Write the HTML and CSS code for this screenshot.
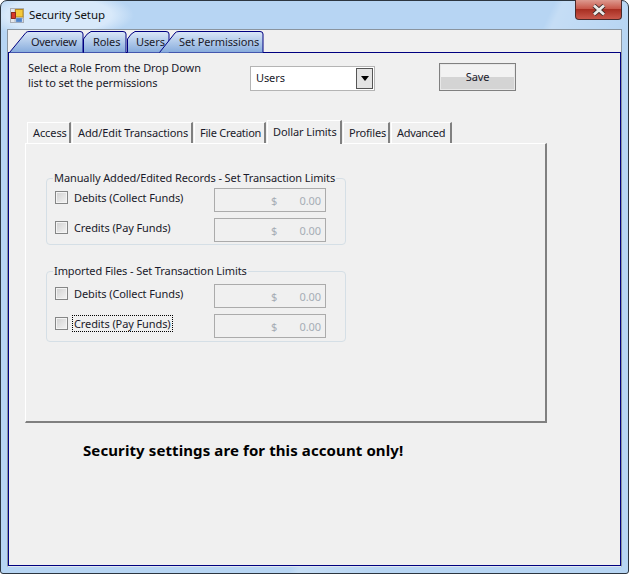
FILE: index.html
```html
<!DOCTYPE html>
<html lang="en">
<head>
    <meta charset="UTF-8">
    <title>Security Setup</title>
    <link rel="stylesheet" href="styles.css">
</head>
<body>
<div class="window">
    <!-- title bar -->
    <div class="titlebar">
        <svg class="app-icon" width="14" height="15" viewBox="0 0 14 15">
            <rect x="0.5" y="0.5" width="13" height="14" fill="#e4e7ec" stroke="#a9aeb6"/>
            <path d="M0.5 4.5 H5 M5 0.5 V14.5 M0.5 10.5 H13.5" stroke="#b4b9c0" fill="none"/>
            <rect x="5.5" y="1.5" width="7.5" height="7.5" fill="#f4c93a" stroke="#b8891c"/>
            <rect x="1.5" y="4.5" width="4" height="6" fill="#d8382a" stroke="#8e2a1c"/>
            <rect x="6" y="10" width="6" height="4" fill="#4f83c9" stroke="#8fb0dc" stroke-width="0.5"/>
        </svg>
        <span class="title-text">Security Setup</span>
        <div class="close-btn">
            <svg width="16" height="12" viewBox="0 0 16 12">
                <path d="M3 1.5 L13 10.5 M13 1.5 L3 10.5" stroke="#3a2a2a" stroke-width="4.4" fill="none"/>
                <path d="M3 1.5 L13 10.5 M13 1.5 L3 10.5" stroke="#ecebe8" stroke-width="2.8" fill="none"/>
            </svg>
        </div>
    </div>

    <div class="client">
        <!-- top tabs -->
        <div class="top-tabs">
            <div class="top-tab tab-overview">
                <svg class="tab-shape" width="75" height="22" viewBox="0 0 75 22"><path d="M0.5 21.5 L17 1.5 Q18 0.5 20 0.5 L71 0.5 Q74 0.5 74 3 L74 21.5" fill="url(#blue1)" stroke="#000080"/><defs><linearGradient id="blue1" x1="0" y1="0" x2="0" y2="1"><stop offset="0" stop-color="#dbe8f8"/><stop offset="1" stop-color="#86abdc"/></linearGradient></defs></svg>
                <span>Overview</span>
            </div>
            <div class="top-tab tab-roles">
                <svg class="tab-shape" width="44" height="22" viewBox="0 0 44 22"><path d="M0.5 21.5 L0.5 8 Q4 2 8 0.5 L40 0.5 Q43 0.5 43 3 L43 21.5" fill="url(#blue1)" stroke="#000080"/></svg>
                <span>Roles</span>
            </div>
            <div class="top-tab tab-users">
                <svg class="tab-shape" width="43" height="22" viewBox="0 0 43 22"><path d="M0.5 21.5 L0.5 8 Q4 2 8 0.5 L39 0.5 Q42 0.5 42 3 L42 21.5" fill="url(#blue1)" stroke="#000080"/></svg>
                <span>Users</span>
            </div>
            <div class="top-tab tab-permissions">
                <svg class="tab-shape" width="105" height="22" viewBox="0 0 105 22"><path d="M0.5 21.5 L16 2 Q17 0.5 20 0.5 L101 0.5 Q104 0.5 104 3 L104 21.5" fill="url(#blue1)" stroke="#000080"/></svg>
                <span>Set Permissions</span>
            </div>
        </div>

        <div class="page">
            <div class="role-row">
                <div class="role-hint">Select a Role From the Drop Down<br>list to set the permissions</div>
                <div class="role-select">
                    <span>Users</span>
                    <div class="select-arrow">
                        <svg width="8" height="5" viewBox="0 0 8 5"><path d="M0 0 H8 L4 5 Z" fill="#000"/></svg>
                    </div>
                </div>
                <div class="save-btn">Save</div>
            </div>

            <!-- inner tabs -->
            <div class="inner-tabs">
                <div class="inner-tab tab-access">Access</div>
                <div class="inner-tab tab-edit">Add/Edit Transactions</div>
                <div class="inner-tab tab-file">File Creation</div>
                <div class="inner-tab tab-dollar active">Dollar Limits</div>
                <div class="inner-tab tab-profiles">Profiles</div>
                <div class="inner-tab tab-advanced">Advanced</div>
            </div>

            <div class="panel">
                <fieldset class="limits-group">
                    <legend>Manually Added/Edited Records - Set Transaction Limits</legend>
                    <div class="limit-row">
                        <div class="check-wrap"><span class="checkbox"></span><span class="check-label">Debits (Collect Funds)</span></div>
                        <div class="amount"><span>$</span><span>0.00</span></div>
                    </div>
                    <div class="limit-row">
                        <div class="check-wrap"><span class="checkbox"></span><span class="check-label">Credits (Pay Funds)</span></div>
                        <div class="amount"><span>$</span><span>0.00</span></div>
                    </div>
                </fieldset>

                <fieldset class="limits-group second">
                    <legend>Imported Files - Set Transaction Limits</legend>
                    <div class="limit-row">
                        <div class="check-wrap"><span class="checkbox"></span><span class="check-label">Debits (Collect Funds)</span></div>
                        <div class="amount"><span>$</span><span>0.00</span></div>
                    </div>
                    <div class="limit-row">
                        <div class="check-wrap"><span class="checkbox"></span><span class="check-label focused">Credits (Pay Funds)</span></div>
                        <div class="amount"><span>$</span><span>0.00</span></div>
                    </div>
                </fieldset>
            </div>

            <div class="notice">Security settings are for this account only!</div>
        </div>
    </div>
</div>
</body>
</html>
```
FILE: styles.css
```css
html, body {
    margin: 0;
    padding: 0;
}

body {
    width: 629px;
    height: 574px;
    overflow: hidden;
    font-family: "Noto Sans", sans-serif;
    font-size: 11px;
    letter-spacing: -0.1px;
    color: #1a1a2a;
}

.window {
    box-sizing: border-box;
    width: 629px;
    height: 574px;
    border: 1px solid #2c3640;
    border-radius: 7px 7px 3px 3px;
    padding: 0 6px 6px 6px;
    background:
        radial-gradient(ellipse 75px 24px at 58px 14px, #d8e9fa 0, #d8e9fa 70%, rgba(216, 233, 250, 0) 100%),
        linear-gradient(115deg, rgba(255, 255, 255, 0) 62%, rgba(255, 255, 255, 0.2) 63%, rgba(255, 255, 255, 0) 72%),
        #b7d5f3;
}

.titlebar {
    display: flex;
    align-items: flex-start;
    height: 28px;
}

.app-icon {
    margin: 7px 0 0 3px;
}

.title-text {
    margin: 5px 0 0 5px;
    font-size: 11.5px;
    line-height: 17px;
    color: #111;
}

.close-btn {
    display: flex;
    align-items: center;
    justify-content: center;
    box-sizing: border-box;
    width: 47px;
    height: 20px;
    margin-left: auto;
    margin-right: 0;
    margin-top: -1px;
    border: 1px solid #4a2a2a;
    border-top: 0;
    border-radius: 0 0 4px 4px;
    background: linear-gradient(#dd9a8f 0, #c8584a 45%, #a82f22 50%, #c9584b 100%);
}

.client {
    height: 538px;
    box-sizing: border-box;
    border: 1px solid #8a949e;
    border-bottom: 1px solid #dfe6ed;
    background: #f0f0f0;
}

.top-tabs {
    display: flex;
    height: 22px;
    margin-top: 1px;
    margin-bottom: -1px;
    padding-left: 1px;
}

.top-tab {
    position: relative;
    height: 22px;
    line-height: 22px;
}

.top-tab span {
    position: relative;
}

.tab-shape {
    position: absolute;
    left: 0;
    top: 0;
}

.tab-overview {
    width: 74px;
    letter-spacing: -0.3px;
}

.tab-overview span {
    margin-left: 22px;
}

.tab-roles {
    width: 44px;
}

.tab-roles span {
    margin-left: 10px;
}

.tab-users {
    width: 32px;
}

.tab-users span {
    margin-left: 9px;
}

.tab-permissions {
    width: 105px;
}

.tab-permissions span {
    margin-left: 20px;
}

.page {
    height: 514px;
    box-sizing: border-box;
    border: 1px solid #000080;
    padding-left: 16px;
}

.role-row {
    display: flex;
    align-items: flex-start;
    height: 66px;
}

.role-hint {
    width: 222px;
    margin: 7px 0 0 3px;
    line-height: 15px;
}

.role-select {
    display: flex;
    justify-content: space-between;
    box-sizing: border-box;
    width: 125px;
    height: 25px;
    margin-top: 13px;
    border: 1px solid #b4b4b4;
    background: #fff;
    padding: 1px;
    line-height: 19px;
}

.role-select span {
    margin-left: 4px;
}

.select-arrow {
    display: flex;
    align-items: center;
    justify-content: center;
    box-sizing: border-box;
    width: 17px;
    height: 21px;
    border: 1px solid #555;
    background: #e4e4e4;
}

.save-btn {
    box-sizing: border-box;
    width: 77px;
    height: 28px;
    margin: 10px 0 0 64px;
    border: 1px solid #808080;
    box-shadow: inset 0 0 0 1px #e8e8e8;
    background: linear-gradient(#f2f2f2 50%, #d4d4d4 50%);
    line-height: 26px;
    text-align: center;
}

.inner-tabs {
    display: flex;
    align-items: flex-end;
    height: 24px;
    padding-left: 2px;
}

.inner-tab {
    box-sizing: border-box;
    height: 21px;
    padding-left: 5px;
    margin-right: 1px;
    border-top: 1px solid #fff;
    border-left: 1px solid #fff;
    border-right: 2px solid #808080;
    line-height: 20px;
    white-space: nowrap;
}

.inner-tab.active {
    height: 24px;
    position: relative;
    line-height: 22px;
    margin-bottom: -1px;
    z-index: 1;
    background: #f0f0f0;
}

.tab-access {
    width: 44px;
}

.tab-edit {
    width: 121px;
}

.tab-file {
    width: 72px;
    letter-spacing: -0.25px;
}

.tab-dollar {
    width: 75px;
}

.tab-profiles {
    width: 47px;
    letter-spacing: -0.2px;
}

.tab-advanced {
    width: 61px;
    letter-spacing: -0.3px;
}

.panel {
    box-sizing: border-box;
    width: 522px;
    height: 280px;
    border-top: 1px solid #fff;
    border-left: 1px solid #fff;
    border-right: 2px solid #808080;
    border-bottom: 2px solid #808080;
    padding: 27px 0 0 20px;
}

.limits-group {
    box-sizing: border-box;
    width: 300px;
    height: 74px;
    margin: 0;
    padding: 3px 0 0 8px;
    border: 1px solid #d5dfe6;
    border-radius: 4px;
}

.limits-group.second {
    height: 78px;
    margin-top: 19px;
    padding-top: 6px;
}

.limits-group legend {
    margin-left: -2px;
    padding: 0 1px;
    line-height: 14px;
    white-space: nowrap;
}

.limit-row {
    display: flex;
    justify-content: space-between;
    align-items: flex-start;
    height: 24px;
    margin-bottom: 6px;
    padding-right: 19px;
}

.check-wrap {
    display: flex;
    align-items: center;
    height: 18px;
}

.checkbox {
    box-sizing: border-box;
    width: 13px;
    height: 13px;
    border: 1px solid #858686;
    box-shadow: inset 0 0 0 1px #f4f4f4;
    background: linear-gradient(135deg, #d0d0d0, #f4f4f4);
}

.check-label {
    margin-left: 6px;
}

.check-label.focused {
    margin-left: 5px;
    padding: 0 1px;
    outline: 1px dotted #000;
}

.amount {
    display: flex;
    justify-content: space-between;
    box-sizing: border-box;
    width: 112px;
    height: 24px;
    padding: 0 4px 0 56px;
    border: 1px solid #ababab;
    color: #a6adb5;
    line-height: 23px;
}

.notice {
    margin: 17px 0 0 58px;
    font-size: 15px;
    font-weight: bold;
    line-height: 20px;
    letter-spacing: 0.1px;
    color: #000;
}
```
